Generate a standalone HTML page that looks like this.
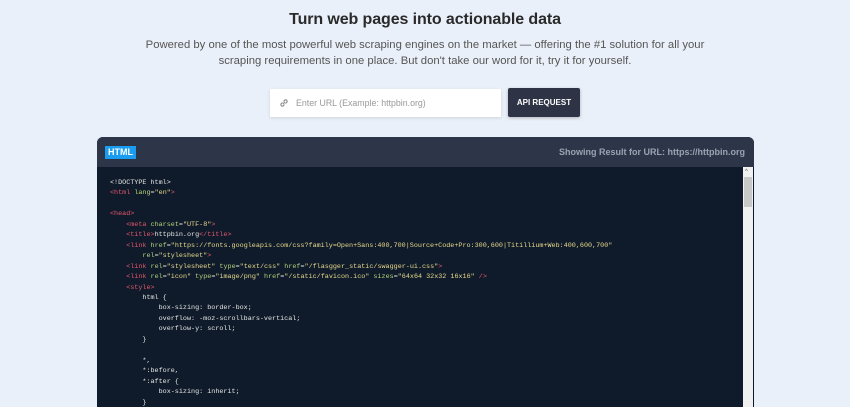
<!DOCTYPE html>
<html><head><meta charset="utf-8"><style>
*{margin:0;padding:0;box-sizing:border-box}
body{width:850px;height:400px;overflow:hidden;background:#eaf0f9;font-family:"Liberation Sans",sans-serif;position:relative}
h1{position:absolute;top:11px;left:0;width:850px;text-align:center;font-size:16px;font-weight:bold;color:#2a2a2a;letter-spacing:-0.1px}
p.sub{position:absolute;top:38px;left:0;width:850px;text-align:center;font-size:11.3px;line-height:15.5px;color:#555}
.inp{position:absolute;left:270px;top:89px;width:231px;height:28px;background:#fff;box-shadow:0 1px 3px rgba(0,0,0,.12);font-size:8.8px;color:#999;line-height:28px;padding-left:26px}
.inp svg{position:absolute;left:8px;top:8px}
.btn{position:absolute;left:508px;top:88px;width:72px;height:29px;background:#2e3345;color:#fff;font-size:8px;font-weight:bold;text-align:center;line-height:29px;border-radius:2px;box-shadow:0 1px 3px rgba(0,0,0,.25)}
.panel{position:absolute;left:97px;top:137px;width:657px;height:270px;background:#0f1b2a;border-radius:6px 6px 0 0;overflow:hidden}
.hd{height:30px;background:#2d3648;position:relative}
.tag{position:absolute;left:8px;top:9px;background:#1a9cf0;color:#fff;font-size:9px;font-weight:bold;padding:1px 3px;line-height:11px}
.res{position:absolute;right:9px;top:10px;color:#9aa3b2;font-size:9px;font-weight:bold}
.sb{position:absolute;right:1px;top:30px;width:10px;height:240px;background:#f0f0f0}
.sb .th{position:absolute;left:1px;top:10px;width:8px;height:30px;background:#c8c8c8}
.sb .ar{position:absolute;left:2px;top:2px;font-size:6px;color:#555}
pre{position:absolute;left:13px;top:41px;font-family:"Liberation Mono",monospace;font-size:6.75px;line-height:10.45px;color:#e6e6e6}
.t{color:#e2566b}.a{color:#b5d07a}.v{color:#e8d98b}
</style></head><body>
<h1>Turn web pages into actionable data</h1>
<p class="sub">Powered by one of the most powerful web scraping engines on the market — offering the #1 solution for all your<br>scraping requirements in one place. But don't take our word for it, try it for yourself.</p>
<div class="inp"><svg width="12" height="12" viewBox="0 0 12 12" fill="none" stroke="#888" stroke-width="1.1"><path d="M5 7l2-2M4.5 5.5L3 7a1.5 1.5 0 0 0 2 2l1.5-1.5M7.5 6.5L9 5a1.5 1.5 0 0 0-2-2L5.5 4.5"/></svg>Enter URL (Example: httpbin.org)</div>
<div class="btn">API REQUEST</div>
<div class="panel">
<div class="hd"><span class="tag">HTML</span><span class="res">Showing Result for URL: https://httpbin.org</span></div>
<pre>&lt;!DOCTYPE html&gt;
<span class="t">&lt;html</span> <span class="a">lang</span>=<span class="v">"en"</span><span class="t">&gt;</span>

<span class="t">&lt;head&gt;</span>
    <span class="t">&lt;meta</span> <span class="a">charset</span>=<span class="v">"UTF-8"</span><span class="t">&gt;</span>
    <span class="t">&lt;title&gt;</span>httpbin.org<span class="t">&lt;/title&gt;</span>
    <span class="t">&lt;link</span> <span class="a">href</span>=<span class="v">"https://fonts.googleapis.com/css?family=Open+Sans:400,700|Source+Code+Pro:300,600|Titillium+Web:400,600,700"</span>
        <span class="a">rel</span>=<span class="v">"stylesheet"</span><span class="t">&gt;</span>
    <span class="t">&lt;link</span> <span class="a">rel</span>=<span class="v">"stylesheet"</span> <span class="a">type</span>=<span class="v">"text/css"</span> <span class="a">href</span>=<span class="v">"/flasgger_static/swagger-ui.css"</span><span class="t">&gt;</span>
    <span class="t">&lt;link</span> <span class="a">rel</span>=<span class="v">"icon"</span> <span class="a">type</span>=<span class="v">"image/png"</span> <span class="a">href</span>=<span class="v">"/static/favicon.ico"</span> <span class="a">sizes</span>=<span class="v">"64x64 32x32 16x16"</span> <span class="t">/&gt;</span>
    <span class="t">&lt;style&gt;</span>
        html {
            box-sizing: border-box;
            overflow: -moz-scrollbars-vertical;
            overflow-y: scroll;
        }

        *,
        *:before,
        *:after {
            box-sizing: inherit;
        }</pre>
<div class="sb"><span class="ar">^</span><div class="th"></div></div>
</div>
</body></html>
